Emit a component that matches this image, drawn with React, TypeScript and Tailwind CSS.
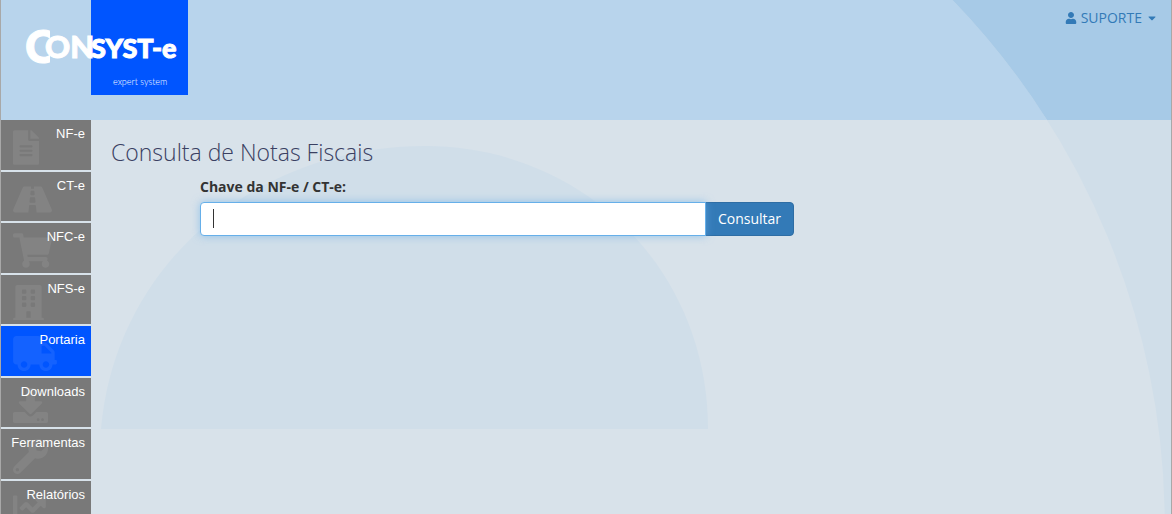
import { FaFileAlt, FaRoad, FaShoppingCart, FaBuilding, FaTruck, FaDownload, FaWrench, FaChartLine, FaUser, FaCaretDown } from "react-icons/fa";
import type { IconType } from "react-icons";

type Item = { label: string; icon: IconType; width: string; active?: boolean };

const items: Item[] = [
  { label: "NF-e", icon: FaFileAlt, width: "w-[26px]" },
  { label: "CT-e", icon: FaRoad, width: "w-[39px]" },
  { label: "NFC-e", icon: FaShoppingCart, width: "w-[39px]" },
  { label: "NFS-e", icon: FaBuilding, width: "w-[31px]" },
  { label: "Portaria", icon: FaTruck, width: "w-[44px]", active: true },
  { label: "Downloads", icon: FaDownload, width: "w-[35px]" },
  { label: "Ferramentas", icon: FaWrench, width: "w-[35px]" },
  { label: "Relatórios", icon: FaChartLine, width: "w-[35px]" },
];

function Backdrop() {
  return (
    <svg className="pointer-events-none absolute inset-0 h-full w-full" viewBox="0 0 1170 514" preserveAspectRatio="xMaxYMin slice" aria-hidden="true">
      <path d="M951.5 0A755 755 0 0 1 1163.7 514H1170V0Z" fill="#d0dee9" />
      <path d="M951.5 0A755 755 0 0 1 1046 120H1170V0Z" fill="#a7cae7" />
      <path d="M100 429C114 265 254 146 424 146C581 146 707 268 707 429Z" fill="#d0dee9" />
    </svg>
  );
}

function Logo() {
  return (
    <a href="#" aria-label="Consyst-e expert system" className="ml-6 block">
      <svg width="164" height="95" viewBox="25 0 164 95" fontFamily="Lato, sans-serif" fill="#fff">
        <defs>
          <clipPath id="logo-c">
            <rect x="25" y="20" width="25" height="50" />
          </clipPath>
        </defs>
        <rect x="91" y="0" width="97" height="95" fill="#0055ff" />
        <text x="25" y="63" fontSize="46" fontWeight="900" stroke="#fff" strokeWidth="1" clipPath="url(#logo-c)">C</text>
        <text x="45" y="58" fontSize="31" fontWeight="900" stroke="#fff" strokeWidth="1">ON</text>
        <text x="91" y="58" fontSize="27" fontWeight="900" stroke="#fff" strokeWidth="1">SYST-e</text>
        <text x="113" y="85" fontSize="9" fontWeight="300">expert system</text>
      </svg>
    </a>
  );
}

export default function App() {
  return (
    <div className="relative flex h-screen flex-col overflow-hidden border-x border-[#a8a8a8] bg-[#d8e2ea] font-['Open_Sans',sans-serif] text-sm text-[#333]">
      <div className="absolute inset-x-0 top-0 h-[120px] bg-[#b8d4ec]" />
      <Backdrop />
      <header className="relative flex h-[120px] shrink-0 items-start justify-between">
        <Logo />
        <button type="button" className="mt-2 mr-[13px] flex items-center text-[#337ab7]">
          <FaUser className="mr-1 size-3" />
          SUPORTE
          <FaCaretDown className="ml-1 size-3" />
        </button>
      </header>
      <div className="relative flex min-h-0 flex-1">
        <nav className="flex w-[90px] shrink-0 flex-col gap-[2px] overflow-hidden font-['Liberation_Sans',sans-serif] text-[13px]">
          {items.map(({ label, icon: Icon, width, active }) => (
            <a key={label} href="#" className={`relative block shrink-0 overflow-hidden pt-1 pr-[6px] text-right leading-5 text-white odd:h-[50px] even:h-[49px] ${active ? "bg-[#0055ff]" : "bg-[#797979]"}`}>
              <Icon className={`absolute top-[10px] left-3 h-[35px] text-white/8 ${width}`} />
              <span className="relative">{label}</span>
            </a>
          ))}
        </nav>
        <main className="flex-1 px-5 pt-5">
          <h1 className="text-[23px] leading-6 font-light text-[#3a4062]">Consulta de Notas Fiscais</h1>
          <form className="mx-[89px] mt-[13px] max-w-[594px]" onSubmit={(e) => e.preventDefault()}>
            <label htmlFor="chave" className="mb-[5px] block leading-5 font-bold">Chave da NF-e / CT-e:</label>
            <div className="relative flex">
              <input id="chave" autoFocus className="peer relative z-10 h-[34px] min-w-0 flex-1 rounded-l border border-[#66afe9] bg-white px-3 caret-transparent shadow-[0_0_8px_rgba(102,175,233,0.6)] outline-none" />
              <span className="pointer-events-none absolute top-[7px] left-[13px] z-20 hidden h-[19px] w-px bg-[#333] peer-focus:block" />
              <button type="submit" className="-ml-px h-[34px] rounded-r border border-[#2e6da4] bg-[#337ab7] px-3 text-white">Consultar</button>
            </div>
          </form>
        </main>
      </div>
    </div>
  );
}
